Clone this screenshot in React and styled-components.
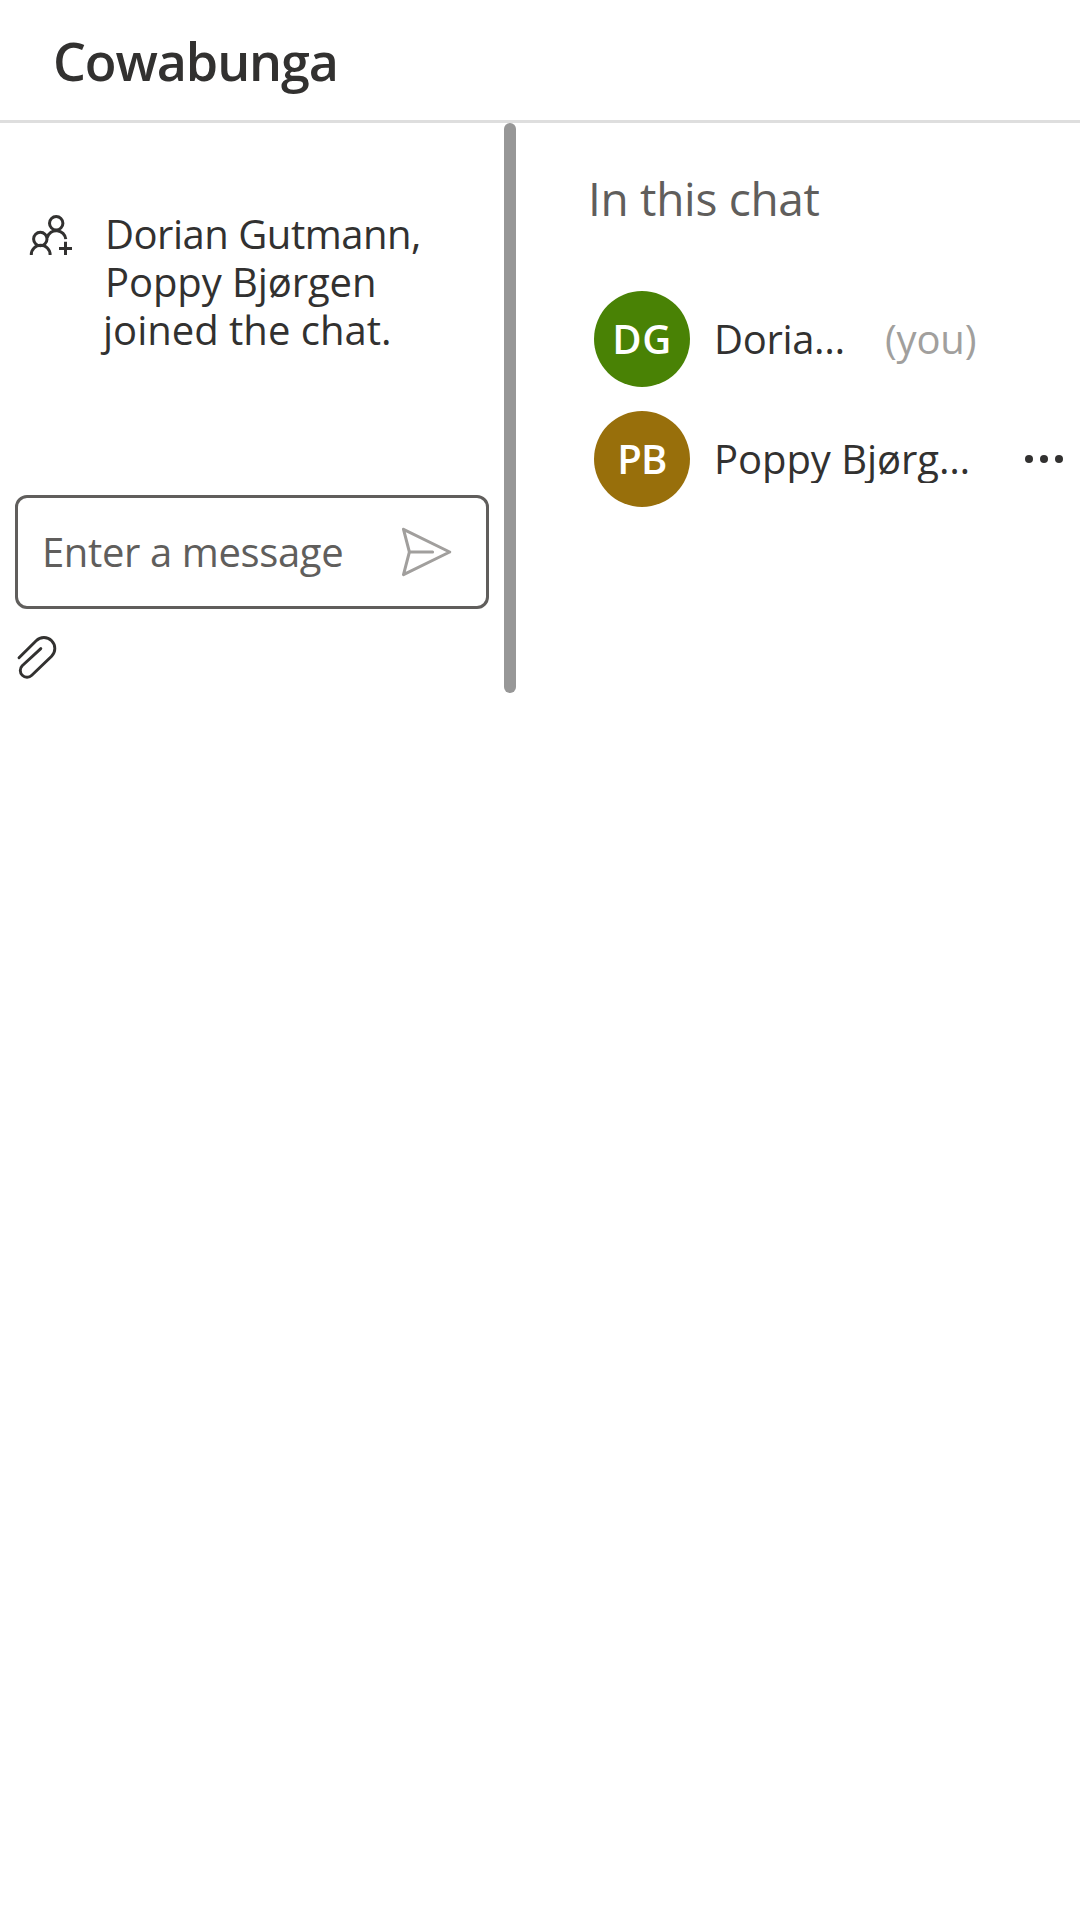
import React from 'react';
import styled, { createGlobalStyle } from 'styled-components';

const GlobalStyle = createGlobalStyle`
  * { box-sizing: border-box; }
  body {
    margin: 0;
    background: #ffffff;
    color: #323130;
    font-family: "Open Sans", "Noto Sans", sans-serif;
    font-size: 40px;
  }
`;

const Page = styled.div`
  display: flex;
  flex-direction: column;
  width: 1080px;
  min-height: 1920px;
`;

const Header = styled.header`
  display: flex;
  align-items: center;
  height: 123px;
  padding: 2px 53px 0;
  border-bottom: 3px solid #dedede;
`;

const Title = styled.h1`
  margin: 0;
  font-size: 52px;
  font-weight: 600;
  line-height: 72px;
  letter-spacing: -1.1px;
`;

const Content = styled.main`
  display: flex;
  height: 570px;
`;

const ChatPane = styled.section`
  display: flex;
  flex-direction: column;
  justify-content: space-between;
  width: 504px;
  padding: 87px 15px 14px;
`;

const SystemMessage = styled.div`
  display: flex;
  gap: 31px;
  padding-left: 14px;
`;

const SystemText = styled.p`
  display: flex;
  flex-direction: column;
  margin: 0;
  line-height: 48px;
`;

const Line = styled.span`
  margin-left: ${(p) => p.$shift || 0}px;
  white-space: nowrap;
  letter-spacing: ${(p) => p.$tracking}px;
`;

const Composer = styled.div`
  display: flex;
  flex-direction: column;
  gap: 25px;
`;

const InputBox = styled.div`
  display: flex;
  align-items: center;
  justify-content: space-between;
  height: 114px;
  padding: 0 34px 0 24px;
  border: 3px solid #605e5c;
  border-radius: 12px;
`;

const Placeholder = styled.span`
  color: #605e5c;
  line-height: 48px;
  letter-spacing: -0.37px;
  white-space: nowrap;
`;

const IconButton = styled.button`
  display: flex;
  flex: none;
  align-self: ${(p) => p.$align || 'auto'};
  margin: 0;
  padding: 0;
  border: 0;
  background: none;
  color: ${(p) => p.$color || '#323130'};
`;

const Icon = styled.svg`
  display: block;
  flex: none;
  fill: none;
  stroke: currentColor;
  stroke-linecap: ${(p) => p.$cap || 'round'};
  stroke-linejoin: round;
`;

const Divider = styled.div`
  width: 12px;
  border-radius: 6px;
  background: #979797;
`;

const PeoplePane = styled.aside`
  flex: 1;
  padding: 51px 15px 0 72px;
`;

const PaneTitle = styled.h2`
  margin: 0 0 69px;
  color: #605e5c;
  font-size: 46px;
  font-weight: 400;
  line-height: 48px;
  letter-spacing: -0.3px;
`;

const PeopleList = styled.div`
  display: flex;
  flex-direction: column;
  gap: 24px;
  padding-left: 6px;
`;

const Person = styled.div`
  display: flex;
  align-items: center;
  height: 96px;
`;

const Avatar = styled.div`
  display: flex;
  align-items: center;
  justify-content: center;
  width: 96px;
  height: 96px;
  margin-right: 24px;
  border-radius: 50%;
  background: ${(p) => p.$color};
  color: #ffffff;
  font-size: 40px;
  font-weight: 600;
  line-height: 48px;
  letter-spacing: ${(p) => p.$tracking}px;
`;

const Name = styled.span`
  width: ${(p) => p.$width}px;
  overflow: hidden;
  line-height: 48px;
  text-overflow: ellipsis;
  white-space: nowrap;
  letter-spacing: ${(p) => p.$tracking}px;
`;

const You = styled.span`
  margin-left: 31px;
  color: #a19f9d;
  line-height: 48px;
  letter-spacing: -0.2px;
`;

const MoreButton = styled(IconButton)`
  margin-left: auto;
`;

const Dots = styled.svg`
  display: block;
  fill: currentColor;
`;

function PeopleAddIcon() {
  return (
    <Icon width="45" height="48" viewBox="29 210 45 48" strokeWidth="3" $cap="butt">
      <circle cx="56.2" cy="223.3" r="6.7" />
      <circle cx="40.3" cy="239" r="6.7" />
      <path d="M31.3 255v-.3a9.4 9.4 0 0 1 18.8 0v.3" />
      <path d="M47.2 237.6a9.5 9.5 0 0 1 18.6 1.6" />
      <path d="M65.5 241.8V255M59 248.4h13" />
    </Icon>
  );
}

function SendIcon() {
  return (
    <Icon width="50" height="50" viewBox="402 527 50 50" strokeWidth="3">
      <path d="M403.5 529.3L449.7 552L403.5 574.7L409.4 552zM409.4 552h23.2" />
    </Icon>
  );
}

function AttachIcon() {
  return (
    <Icon width="42" height="45" viewBox="15 634 42 45" strokeWidth="2.9">
      <path d="M19 657.8L36.2 640.7A10.9 10.9 0 0 1 51.6 656.2L31.8 675.2A6.7 6.7 0 0 1 22.2 665.8L40.8 648.6" />
    </Icon>
  );
}

export default function App() {
  return (
    <Page>
      <GlobalStyle />
      <Header>
        <Title>Cowabunga</Title>
      </Header>
      <Content>
        <ChatPane>
          <SystemMessage>
            <PeopleAddIcon />
            <SystemText>
              <Line $tracking={-0.49}>Dorian Gutmann,</Line>
              <Line $tracking={-0.09}>Poppy Bjørgen</Line>
              <Line $tracking={0} $shift={-2}>joined the chat.</Line>
            </SystemText>
          </SystemMessage>
          <Composer>
            <InputBox>
              <Placeholder>Enter a message</Placeholder>
              <IconButton $color="#a19f9d" aria-label="Send message">
                <SendIcon />
              </IconButton>
            </InputBox>
            <IconButton $align="flex-start" aria-label="Attach file">
              <AttachIcon />
            </IconButton>
          </Composer>
        </ChatPane>
        <Divider />
        <PeoplePane>
          <PaneTitle>In this chat</PaneTitle>
          <PeopleList>
            <Person>
              <Avatar $color="#498205" $tracking={0.5}>DG</Avatar>
              <Name $width={140} $tracking={-0.35}>Dorian Gutmann</Name>
              <You>(you)</You>
            </Person>
            <Person>
              <Avatar $color="#986f0b" $tracking={-0.8}>PB</Avatar>
              <Name $width={266} $tracking={-0.05}>Poppy Bjørgen</Name>
              <MoreButton aria-label="More options">
                <Dots width="42" height="12" viewBox="0 0 42 12">
                  <circle cx="6" cy="6" r="4" />
                  <circle cx="21" cy="6" r="4" />
                  <circle cx="36" cy="6" r="4" />
                </Dots>
              </MoreButton>
            </Person>
          </PeopleList>
        </PeoplePane>
      </Content>
    </Page>
  );
}
